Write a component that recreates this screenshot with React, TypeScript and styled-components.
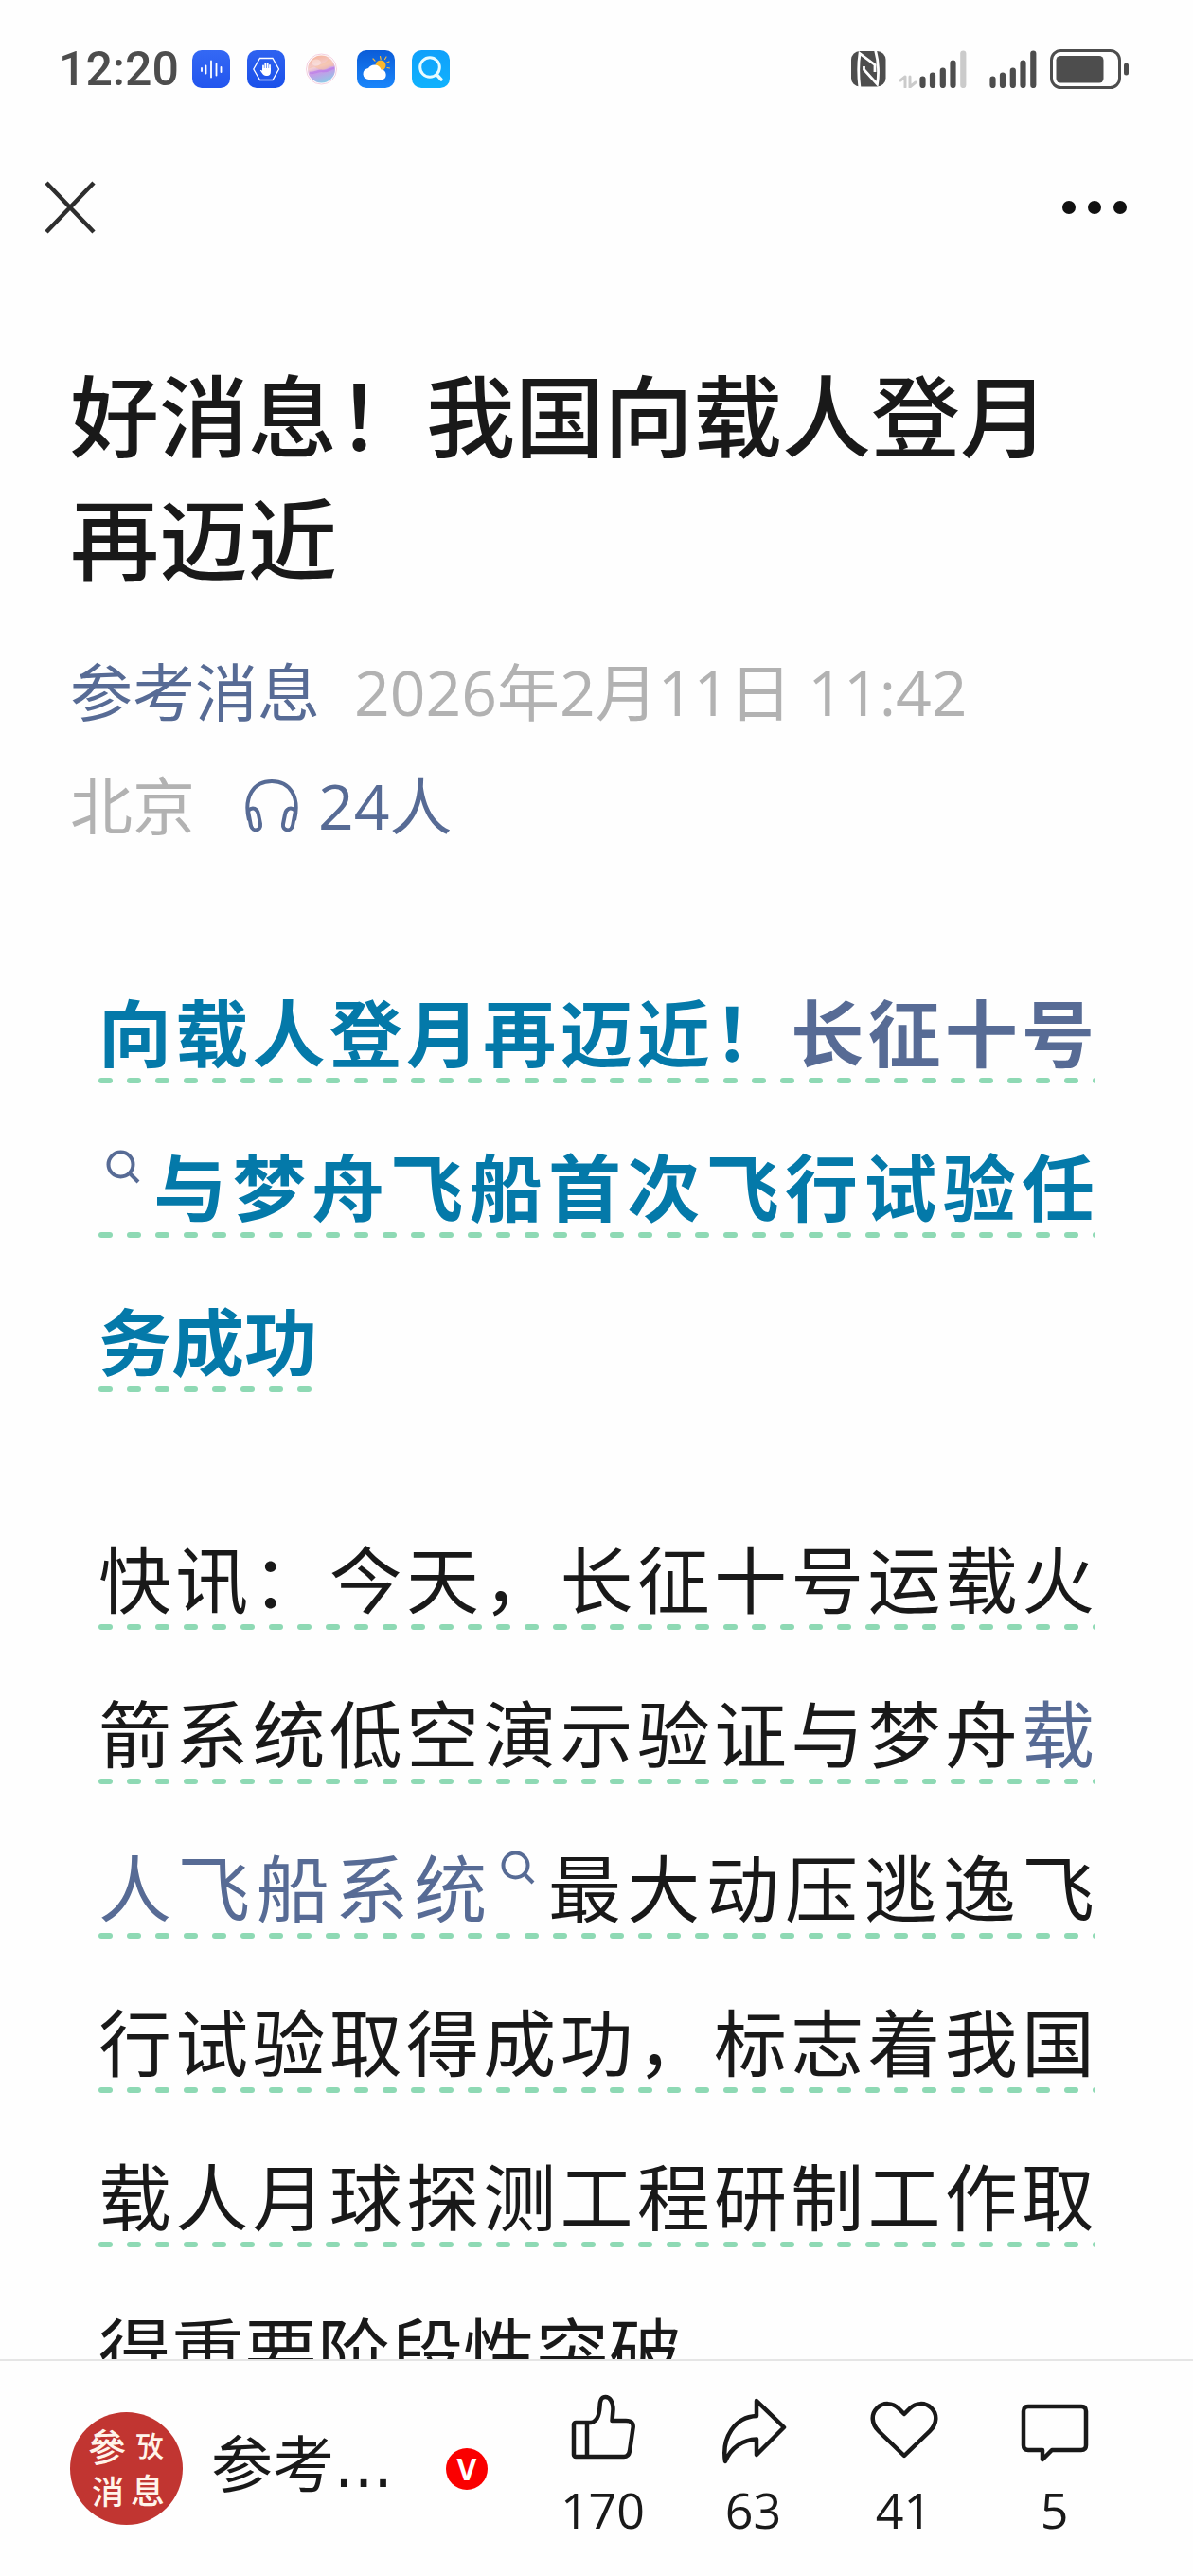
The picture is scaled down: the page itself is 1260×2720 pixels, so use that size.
import React from "react";
import styled, { createGlobalStyle } from "styled-components";

const LINK = "#576b95";
const INK = "#191919";
const STATUS = "#4d4d4d";

const GlobalStyle = createGlobalStyle`
  * { box-sizing: border-box; }
  body {
    margin: 0;
    background: #fefefe;
    color: ${INK};
    font-family: "Open Sans", "Noto Sans CJK SC", sans-serif;
  }
  button { border: 0; padding: 0; background: none; color: inherit; font: inherit; cursor: pointer; }
  a { color: ${LINK}; text-decoration: none; }
  svg { display: block; flex: none; }
`;

const Screen = styled.div`
  display: flex;
  flex-direction: column;
  height: 100vh;
  overflow: hidden;
`;

const StatusBar = styled.div`
  flex: none;
  display: flex;
  align-items: center;
  justify-content: space-between;
  height: 146px;
  padding: 0 68px 0 62px;
  color: ${STATUS};
`;

const StatusGroup = styled.div<{ $gap: number }>`
  display: flex;
  align-items: center;
  gap: ${(p) => p.$gap}px;
`;

const Clock = styled.time`
  font: 500 50px/60px Roboto, sans-serif;
`;

const AppIcons = styled.div`
  display: flex;
  align-items: center;
  gap: 18px;
`;

const NavBar = styled.nav`
  flex: none;
  display: flex;
  align-items: center;
  justify-content: space-between;
  height: 146px;
  padding: 0 66px 0 44px;
`;

const Article = styled.main`
  flex: 1;
  min-height: 0;
  overflow: hidden;
  padding: 78px 74px 0;
`;

const Title = styled.h1`
  margin: 0 0 40px;
  font: 500 94px/130px "Noto Sans CJK SC", sans-serif;
`;

const MetaRow = styled.div<{ $gap: number }>`
  display: flex;
  align-items: center;
  gap: ${(p) => p.$gap}px;
  font-size: 66px;
  line-height: 120px;
  color: #b2b2b2;
`;

const Listen = styled.a`
  display: flex;
  align-items: center;
  gap: 20px;
`;

const Content = styled.section`
  padding: 96px 30px 0;
  font: 400 77px/163px "Noto Sans CJK SC", sans-serif;
  text-align: justify;
`;

const Lead = styled.h2`
  margin: 0 0 88px;
  font-size: inherit;
  font-weight: 700;
  color: #0479a9;
`;

const Paragraph = styled.p`
  margin: 0;
`;

/* Reader highlight: rounded green dashes under every line of the run. */
const Marked = styled.span`
  padding-bottom: 1px;
  background-image: url("data:image/svg+xml,%3Csvg xmlns='http://www.w3.org/2000/svg' width='30' height='6'%3E%3Crect width='15' height='6' rx='3' fill='%238ed9b4'/%3E%3C/svg%3E");
  background-repeat: repeat-x;
  background-position: 0 100%;
  background-size: 30px 6px;
  -webkit-box-decoration-break: clone;
  box-decoration-break: clone;
`;

const TermIcon = styled.svg`
  && { display: inline-block; }
  width: 36px;
  height: 36px;
  margin: 0 8px;
  vertical-align: 34px;
`;

const Footer = styled.footer`
  flex: none;
  display: flex;
  align-items: center;
  justify-content: space-between;
  height: 229px;
  padding: 0 67px 0 74px;
  border-top: 2px solid #e5e5e5;
  background: #fefefe;
`;

const Account = styled.a`
  display: flex;
  align-items: center;
  color: ${INK};
`;

const AccountName = styled.span`
  width: 248px;
  margin-left: 30px;
  padding-bottom: 6px;
  font: 400 65px/80px "DejaVu Sans", "Noto Sans CJK SC", sans-serif;
  white-space: nowrap;
`;

const Verified = styled.span`
  display: grid;
  place-items: center;
  width: 44px;
  height: 44px;
  border-radius: 50%;
  background: #fa0000;
  color: #fff;
  font: 700 32px/44px "Open Sans", sans-serif;
`;

const Actions = styled.div`
  display: flex;
  padding-bottom: 8px;
`;

const Action = styled.button`
  display: flex;
  flex-direction: column;
  align-items: center;
  gap: 18px;
  width: 159px;
  font-size: 52px;
  line-height: 60px;
`;

const Tile = ({ id, from, to, children }: { id: string; from: string; to: string; children: React.ReactNode }) => (
  <svg width="40" height="40" viewBox="0 0 40 40" aria-hidden="true">
    <defs>
      <linearGradient id={id} x1="0" y1="0" x2="0" y2="1">
        <stop offset="0" stopColor={from} />
        <stop offset="1" stopColor={to} />
      </linearGradient>
    </defs>
    <rect width="40" height="40" rx="10" fill={`url(#${id})`} />
    {children}
  </svg>
);

const VoiceApp = () => (
  <Tile id="voice" from="#3468f4" to="#2255ee">
    <path d="M10 19v3M14.500 16.500v8M20 11.500v17M25.500 14.500v12M30.500 18v5" stroke="#fff" strokeWidth="1.800" strokeLinecap="round" />
  </Tile>
);

const GuardApp = () => (
  <Tile id="guard" from="#2e62f0" to="#1a50ea">
    <path d="M13.500 8.500h13.500L33.500 20 27 31.500H13.500L6.800 20Z" fill="none" stroke="#fff" strokeWidth="1.300" />
    <path d="M17 21v-4.500M19.300 20v-6M21.700 20v-6M24 21v-5" stroke="#fff" strokeWidth="1.800" strokeLinecap="round" />
    <path d="M16.100 19h8.800v4c0 2.500-1.500 4-3.700 4h-1.200c-1.800 0-3-1-4-2.500l-2.200-3.300c.8-.6 1.600-.3 2.300.5Z" fill="#fff" />
  </Tile>
);

const OrbApp = () => (
  <svg width="40" height="40" viewBox="0 0 40 40" aria-hidden="true">
    <defs>
      <linearGradient id="orb" x1="0.3" y1="0" x2="0.6" y2="1">
        <stop offset="0" stopColor="#f6b49c" />
        <stop offset="0.4" stopColor="#f3cfd2" />
        <stop offset="0.6" stopColor="#c79be8" />
        <stop offset="1" stopColor="#8ccbe6" />
      </linearGradient>
    </defs>
    <circle cx="20.500" cy="20" r="16" fill="none" stroke="#f5cfe0" />
    <circle cx="20.500" cy="20" r="14.500" fill="url(#orb)" />
    <path d="M7 19c6-5 9 3 15 2 5-1 7-5 12-4-1-4-4-7-6-8-3 5-10 7-21 10Z" fill="#f7c1a0" opacity="0.6" />
    <path d="M8 24c7 0 9-3 14-2s8-3 12-3" fill="none" stroke="#b978ea" strokeWidth="2.500" opacity="0.65" />
    <ellipse cx="15" cy="13" rx="5" ry="3.500" fill="#fff" opacity="0.35" />
  </svg>
);

const WeatherApp = () => (
  <Tile id="weather" from="#0b5cd8" to="#1a86fb">
    <path d="M24.500 6.500l.7 3M31 7l-1.500 2.500M17 9l2 2.200M34 12l-2.500 1.200M32 18.500l2.500.5" stroke="#f5b93a" strokeWidth="1.200" strokeLinecap="round" />
    <circle cx="25" cy="16" r="5.500" fill="#f8b62d" />
    <path d="M13 31a6 6 0 0 1-1-12 7.500 7.500 0 0 1 13.500 1.500A5.400 5.400 0 0 1 27 31Z" fill="#fff" />
  </Tile>
);

const SearchApp = () => (
  <Tile id="search" from="#0fa0fb" to="#10b2fd">
    <circle cx="19" cy="18" r="10.300" fill="none" stroke="#e8fbff" strokeWidth="3" />
    <path d="M26.500 26l4.500 5" stroke="#e8fbff" strokeWidth="3.400" strokeLinecap="round" />
  </Tile>
);

const Nfc = () => (
  <svg width="37" height="38" viewBox="0 0 37 38" aria-hidden="true">
    <rect width="36.500" height="37.500" rx="9" fill={STATUS} />
    <path d="M9 39C7.500 27 7.500 12 9 2.500L25 14.500V22M13.500 16V19.500L27.500 35C29.200 26 29 11 25.500-1" fill="none" stroke="#fefefe" strokeWidth="2.800" />
  </svg>
);

const Signal = ({ weak = false }: { weak?: boolean }) => (
  <svg width="50" height="40" viewBox="0 0 50 40" aria-hidden="true">
    <path d="M3.500 30.500v6.500M14 26.500v10.500M24.800 21.500v15.500M35.500 13.500v23.500" stroke={STATUS} strokeWidth="6.200" strokeLinecap="round" />
    <path d="M46.300 3.500v33.500" stroke={weak ? "#cbcbcb" : STATUS} strokeWidth="6.200" strokeLinecap="round" />
  </svg>
);

const DataArrows = () => (
  <svg width="18" height="40" viewBox="0 0 18 40" aria-hidden="true">
    <path d="M1 32l5-4v11M11 28v11l6-5" fill="none" stroke="#cbcbcb" strokeWidth="3" strokeLinejoin="round" strokeLinecap="round" />
  </svg>
);

const Battery = () => (
  <svg width="83" height="42" viewBox="0 0 83 42" aria-hidden="true">
    <rect x="1.500" y="1.500" width="72" height="39" rx="10" fill="none" stroke={STATUS} strokeWidth="3" />
    <rect x="6.500" y="7" width="50" height="28.500" rx="4.500" fill={STATUS} />
    <rect x="78" y="14.500" width="5" height="13" rx="2.500" fill={STATUS} />
  </svg>
);

const Headphones = () => (
  <svg width="58" height="58" viewBox="0 0 58 58" fill="none" stroke={LINK} strokeWidth="4" aria-hidden="true">
    <path d="M5 45C-1 20 10 4 29 4s30 16 24 41" />
    <path d="M4 35c5-5 10-2 11 4l2 10c1 7-8 9-10 2ZM54 35c-5-5-10-2-11 4l-2 10c-1 7 8 9 10 2Z" strokeLinejoin="round" />
  </svg>
);

const TermSearch = () => (
  <TermIcon viewBox="0 0 36 36" fill="none" stroke={LINK} strokeWidth="4" aria-hidden="true">
    <circle cx="15.500" cy="15.500" r="13" />
    <path d="M24.500 24.500L34 34" />
  </TermIcon>
);

const ActionIcon = ({ d }: { d: string }) => (
  <svg width="76" height="76" viewBox="0 0 76 76" fill="none" stroke={INK} strokeWidth="4.500" strokeLinejoin="round" aria-hidden="true">
    <path d={d} />
  </svg>
);

const Seal = () => (
  <svg width="119" height="119" viewBox="0 0 119 119" role="img" aria-label="参考消息">
    <circle cx="59.500" cy="59.500" r="59.500" fill="#c13531" />
    <g fill="#fff4ea" textAnchor="middle" fontFamily="'Noto Sans CJK TC', 'Noto Sans CJK SC', sans-serif" fontWeight="500">
      <text x="39" y="52" fontSize="40">參</text>
      <text x="84" y="47" fontSize="30">攷</text>
      <text x="40" y="97" fontSize="34">消</text>
      <text x="82" y="97" fontSize="36">息</text>
    </g>
  </svg>
);

const actions = [
  {
    label: "赞",
    count: 170,
    d: "M9 32H25C32 31 34 24 34.500 15C34.700 8 36 5 40.500 5C45 5 48.500 10 48.500 18L47.500 30H62C68 30 70.500 33 69.500 38L66 62C65.300 66 63.500 68 60 68H9C8 68 7 67 7 66V34C7 33 8 32 9 32ZM21 32V68",
  },
  {
    label: "转发",
    count: 63,
    d: "M41 9L70 37L41 66V49.500C27 50 14 58 8 73C4 48 18 26 41 25Z",
  },
  {
    label: "喜欢",
    count: 41,
    d: "M38 67L11 41C3 33 3 23 9 17C16 10 26 11 32 17L38 23L44 17C50 11 60 10 67 17C73 23 73 33 65 41Z",
  },
  {
    label: "留言",
    count: 5,
    d: "M10 15H66Q71 15 71 20V56Q71 61 66 61H35L25 71V61H10Q5 61 5 56V20Q5 15 10 15Z",
  },
];

export default function App() {
  return (
    <Screen lang="zh-CN">
      <GlobalStyle />
      <StatusBar>
        <StatusGroup $gap={14}>
          <Clock>12:20</Clock>
          <AppIcons>
            <VoiceApp />
            <GuardApp />
            <OrbApp />
            <WeatherApp />
            <SearchApp />
          </AppIcons>
        </StatusGroup>
        <StatusGroup $gap={24}>
          <StatusGroup $gap={14}>
            <Nfc />
            <StatusGroup $gap={3}>
              <DataArrows />
              <Signal weak />
            </StatusGroup>
          </StatusGroup>
          <StatusGroup $gap={14}>
            <Signal />
            <Battery />
          </StatusGroup>
        </StatusGroup>
      </StatusBar>

      <NavBar>
        <button type="button" aria-label="关闭">
          <svg width="60" height="60" viewBox="0 0 60 60" stroke="#2e2e2e" strokeWidth="4.500">
            <path d="M5 4L55 56M55 4L5 56" />
          </svg>
        </button>
        <button type="button" aria-label="更多">
          <svg width="76" height="60" viewBox="0 0 76 60" fill="#111">
            <circle cx="11" cy="30" r="7" />
            <circle cx="38" cy="30" r="7" />
            <circle cx="65" cy="30" r="7" />
          </svg>
        </button>
      </NavBar>

      <Article>
        <Title>好消息！我国向载人登月再迈近</Title>
        <MetaRow $gap={36}>
          <a href="#account">参考消息</a>
          <time dateTime="2026-02-11T11:42">2026年2月11日 11:42</time>
        </MetaRow>
        <MetaRow $gap={52}>
          <span>北京</span>
          <Listen href="#listen">
            <Headphones />
            <span>24人</span>
          </Listen>
        </MetaRow>

        <Content>
          <Lead>
            <Marked>
              向载人登月再迈近！
              <a href="#cz10">
                长征十号
                <TermSearch />
              </a>
              与梦舟飞船首次飞行试验任务成功
            </Marked>
          </Lead>
          <Paragraph>
            <Marked>
              快讯：今天，长征十号运载火箭系统低空演示验证与梦舟
              <a href="#spacecraft">
                载人飞船系统
                <TermSearch />
              </a>
              最大动压逃逸飞行试验取得成功，标志着我国载人月球探测工程研制工作取得重要阶段性突破
            </Marked>
          </Paragraph>
        </Content>
      </Article>

      <Footer>
        <Account href="#account">
          <Seal />
          <AccountName>参考...</AccountName>
          <Verified>V</Verified>
        </Account>
        <Actions>
          {actions.map((a) => (
            <Action key={a.label} type="button" aria-label={`${a.label} ${a.count}`}>
              <ActionIcon d={a.d} />
              <span>{a.count}</span>
            </Action>
          ))}
        </Actions>
      </Footer>
    </Screen>
  );
}
